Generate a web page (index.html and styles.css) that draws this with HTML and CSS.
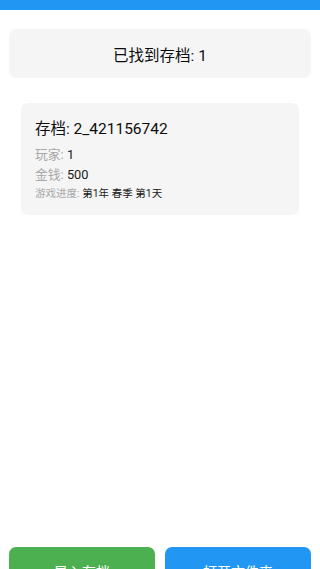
FILE: index.html
```html
<!DOCTYPE html>
<html lang="zh">
<head>
<meta charset="utf-8">
<meta name="viewport" content="width=device-width, initial-scale=1">
<link rel="stylesheet" href="styles.css">
</head>
<body>
<div class="app">
  <div class="topbar"></div>
  <div class="content">
    <div class="header">已找到存档: 1</div>
    <div class="card">
      <div class="card-title">存档: 2_421156742</div>
      <div class="row row-md"><span class="label">玩家: </span><span class="value">1</span></div>
      <div class="row row-md"><span class="label">金钱: </span><span class="value">500</span></div>
      <div class="row row-sm"><span class="label">游戏进度: </span><span class="value">第1年 春季 第1天</span></div>
    </div>
  </div>
  <div class="footer">
    <button class="btn btn-green">导入存档</button>
    <button class="btn btn-blue">打开文件夹</button>
  </div>
</div>
</body>
</html>
```
FILE: styles.css
```css
* { box-sizing: border-box; }
html, body { margin: 0; padding: 0; }
body {
  font-family: Roboto, "Noto Sans CJK SC", sans-serif;
  background: #fff;
  color: #222;
}
.app {
  height: 100vh;
  display: flex;
  flex-direction: column;
  overflow: hidden;
}
.topbar {
  flex: none;
  height: 10px;
  background: #2196f3;
}
.content {
  flex: 1 0 auto;
}
.header {
  margin: 19px 9px 0;
  height: 49px;
  background: #f5f5f5;
  border-radius: 7px;
  display: flex;
  align-items: center;
  justify-content: center;
  font-size: 15.5px;
  color: #0d0d0d;
}
.card {
  margin: 25px 21px 0;
  padding: 14px 14px 12px;
  background: #f5f5f5;
  border-radius: 7px;
}
.card-title {
  font-size: 15.5px;
  line-height: 24px;
  color: #0d0d0d;
  margin-bottom: 4px;
}
.row-md {
  font-size: 12.8px;
  line-height: 20px;
}
.row-sm {
  font-size: 10.5px;
  line-height: 18px;
}
.label { color: #a8a8a8; }
.value { color: #1a1a1a; }
.footer {
  flex: none;
  height: 22px;
  display: flex;
  gap: 10px;
  padding: 0 9px;
  overflow: visible;
}
.btn {
  flex: 1;
  height: 48px;
  border: none;
  border-radius: 7px;
  color: #fff;
  font-family: inherit;
  font-size: 14px;
  padding: 0;
}
.btn-green { background: #4caf50; }
.btn-blue { background: #2196f3; }
```
